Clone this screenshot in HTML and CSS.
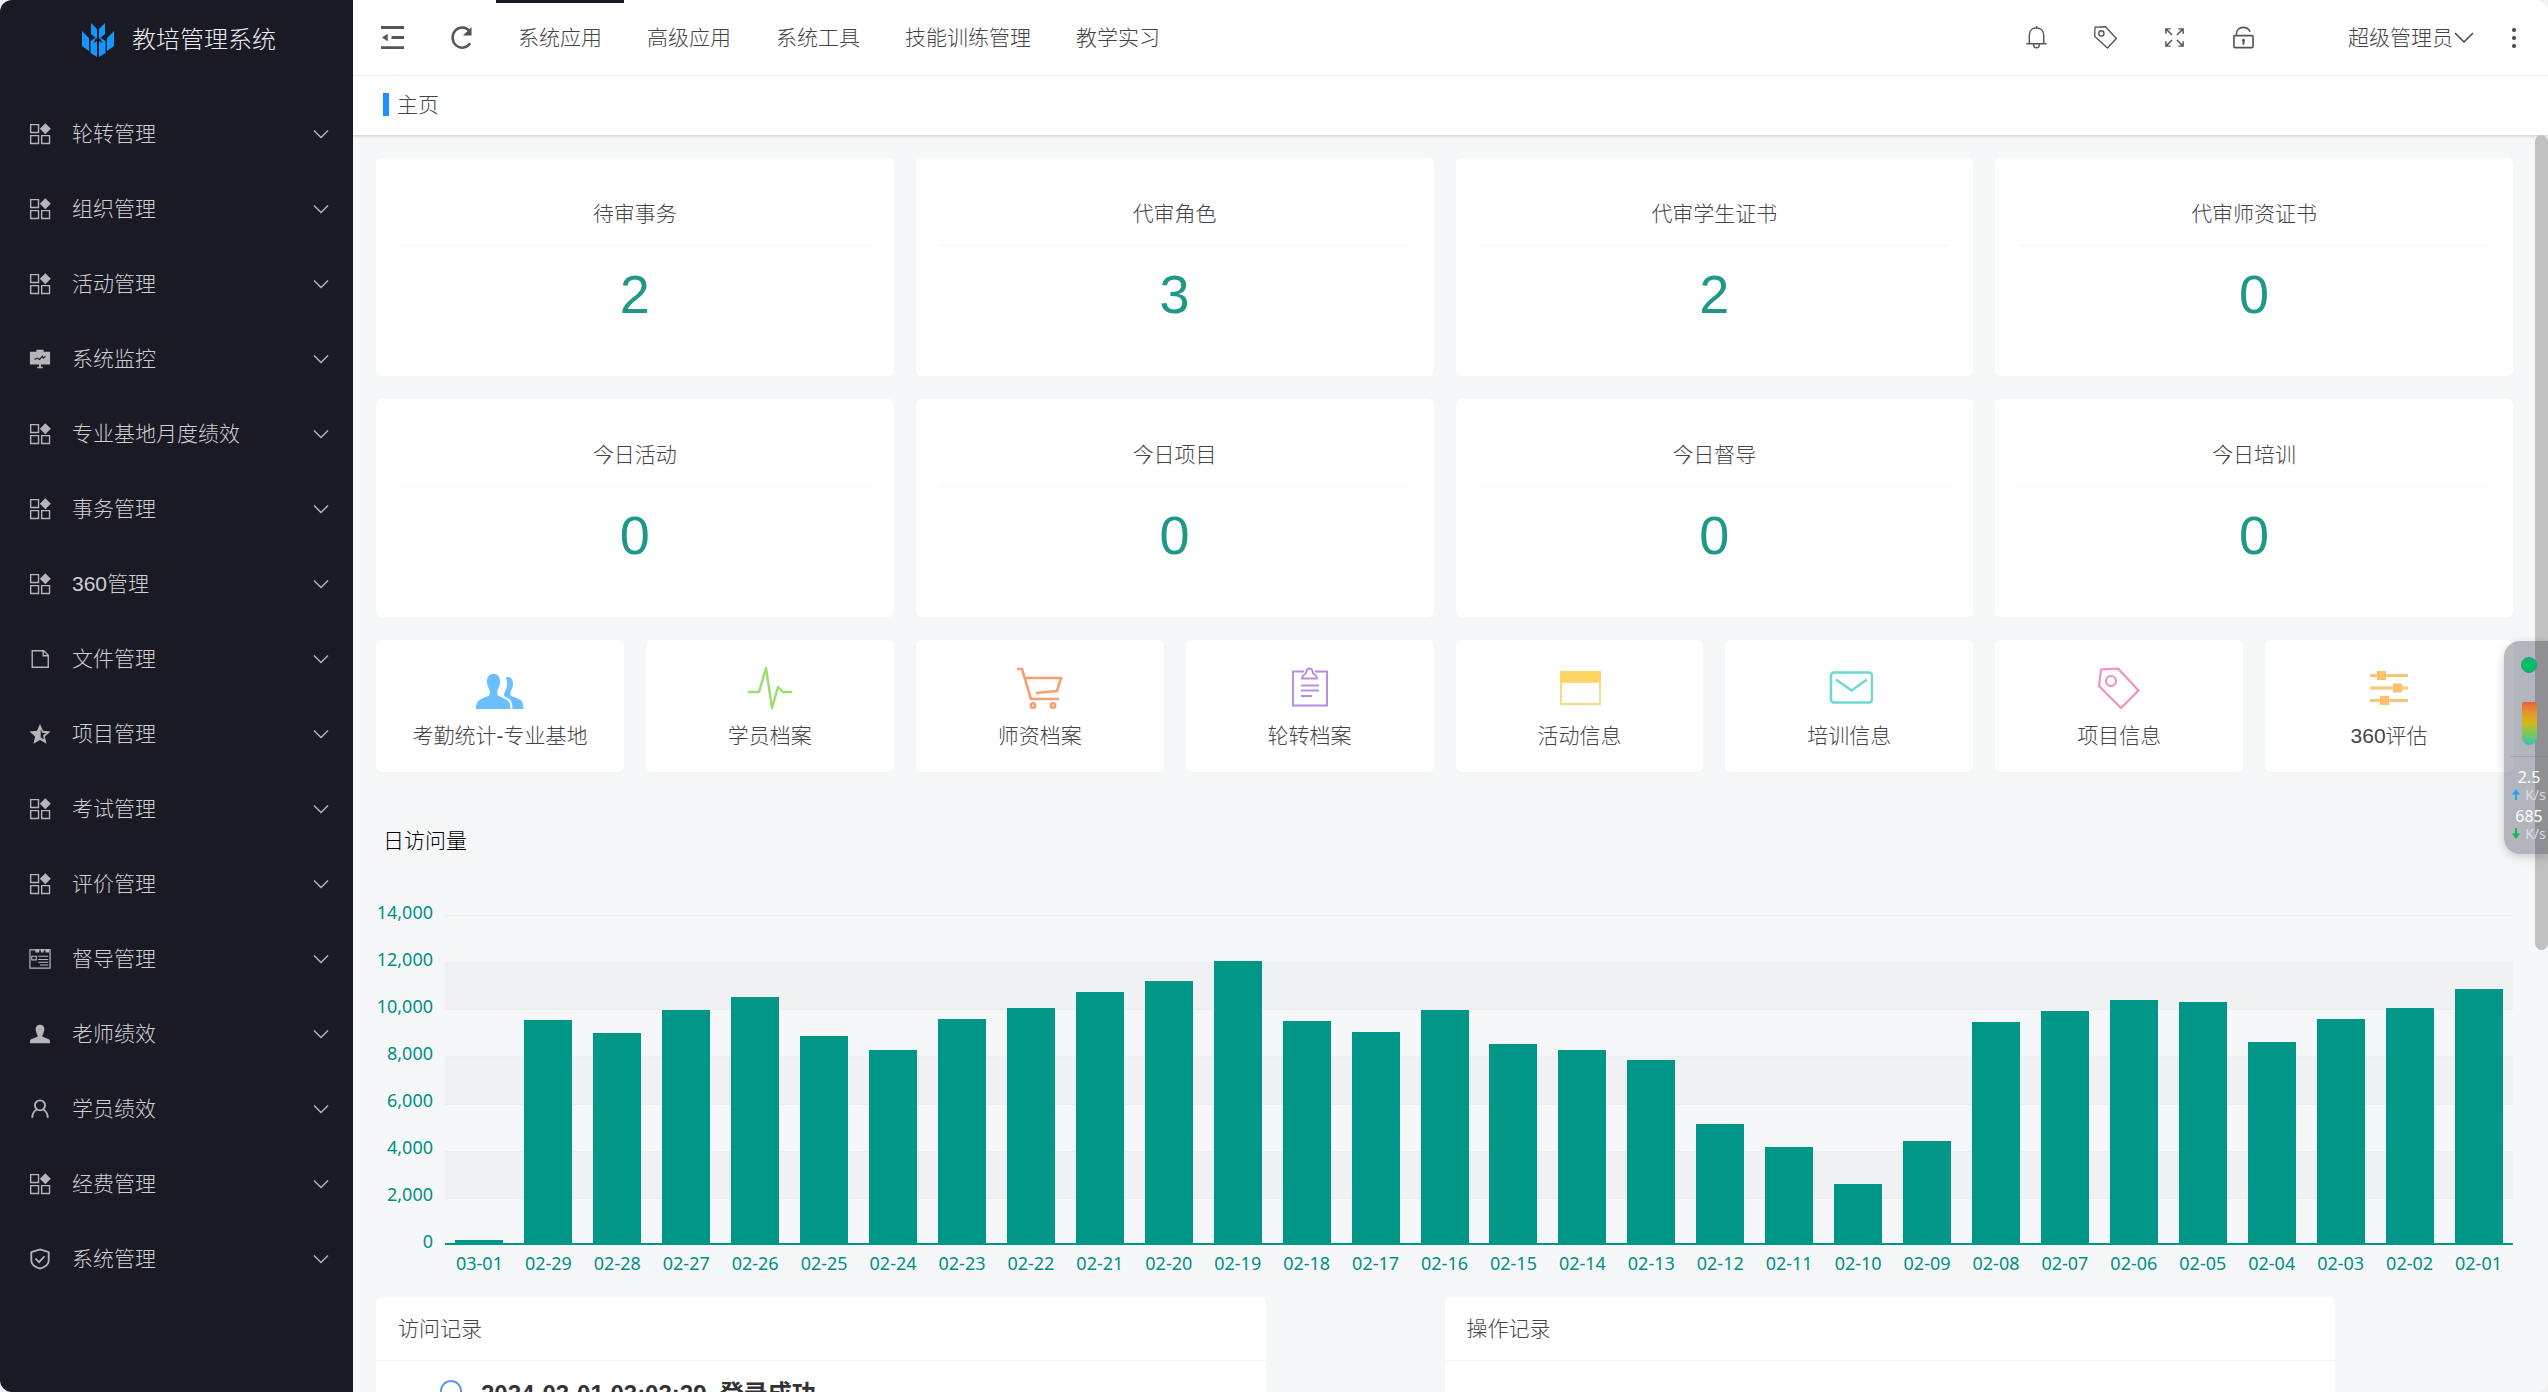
FILE: index.html
```html
<!DOCTYPE html>
<html lang="zh-CN">
<head>
<meta charset="utf-8">
<title>教培管理系统</title>
<link rel="stylesheet" href="styles.css">
</head>
<body>
<svg class="sprite" aria-hidden="true">
  <symbol id="i-app" viewBox="0 0 24 24"><g fill="none" stroke="currentColor" stroke-width="1.5"><path d="M1.800 1.800h8.600v8.600H1.800zM1.800 13.800h8.600v8.600H1.800zM13.800 13.800h8.600v8.600h-8.600z"/></g><path d="M17.800.3l6 6-6 6-6-6z" fill="currentColor"/></symbol>
  <symbol id="i-down" viewBox="0 0 16 16"><path d="M1 4.500l7 7 7-7" fill="none" stroke="currentColor" stroke-width="1.500"/></symbol>
  <symbol id="i-board" viewBox="0 0 24 24"><path d="M8 2h8v2h7v14h-10v2.500h2V22H9v-1.500h2V18H1V4h7z" fill="currentColor"/><path d="M6 12.500l3-1.500 2.500 1.500 3-3.500 1 2 2.500-2" fill="none" stroke="#191a23" stroke-width="1.200"/></symbol>
  <symbol id="i-file" viewBox="0 0 24 24"><path d="M3.500 3h12.500l5 5v13h-17.500zM15.500 3v5.500h5.500" fill="none" stroke="currentColor" stroke-width="1.500"/></symbol>
  <symbol id="i-star" viewBox="0 0 24 24"><path d="M12 1l3.300 7.500 8.200.8-6.200 5.400 1.800 8L12 18.500l-7.100 4.200 1.800-8L.5 9.300l8.200-.8z" fill="currentColor"/><path d="M12.800 6.500l1.500 4 4.200.4-3.200 2.800.9 4.100-3.400-2z" fill="#191a23"/></symbol>
  <symbol id="i-form" viewBox="0 0 24 24"><path d="M1 2h22v20H1z" fill="none" stroke="currentColor" stroke-width="1.300"/><path d="M7 1h4v4H7zM13 1h3v4h-3zM18 1h4v4h-4z" fill="currentColor"/><path d="M3 9h5v4H3zM10 9h11M10 12.500h11M10 15.500h11M12 18.500h9" fill="none" stroke="currentColor" stroke-width="1.200"/></symbol>
  <symbol id="i-person" viewBox="0 0 24 24"><path d="M12 2c3.500 0 5 2.400 4.700 5.500-.2 2.500-1.500 4.500-2 5.500v2l7 2.700c1 .4 1.300 1.300 1.300 4.300H1c0-3 .3-3.900 1.300-4.300l7-2.700v-2c-.5-1-1.800-3-2-5.500C7 4.400 8.500 2 12 2z" fill="currentColor"/></symbol>
  <symbol id="i-user" viewBox="0 0 24 24"><g fill="none" stroke="currentColor" stroke-width="2"><circle cx="12" cy="8" r="5.500"/><path d="M8.500 12.500C5 14.500 3.500 17.500 3.500 21.500M15.500 12.500c3.500 2 5 5 5 9"/></g></symbol>
  <symbol id="i-shield" viewBox="0 0 24 24"><path d="M12 1.500l9.500 3v9c0 4.500-5 7.500-9.500 9-4.500-1.500-9.500-4.500-9.500-9v-9zM7 11.500l4 4 6-6.500" fill="none" stroke="currentColor" stroke-width="2"/></symbol>
</svg>
<div class="app">
  <aside class="side">
    <a class="brand" href="#">
      <svg class="brand-mark" viewBox="0 0 32 34"><path fill="#1296ff" d="M9 0l6 6v10l-6-5zM23 0l-6 6v10l6-5zM0 8l7 7v13l-7-5zM32 8l-7 7v13l7-5zM8.500 18l6-4-3 6 3.500-2v16l-6.500-4zM23.500 18l-6-4 3 6-3.500-2v16l6.500-4z"/></svg>
      <span>教培管理系统</span>
    </a>
    <nav class="menu">
      <a href="#"><svg><use href="#i-app"/></svg><span>轮转管理</span><svg class="chev"><use href="#i-down"/></svg></a>
      <a href="#"><svg><use href="#i-app"/></svg><span>组织管理</span><svg class="chev"><use href="#i-down"/></svg></a>
      <a href="#"><svg><use href="#i-app"/></svg><span>活动管理</span><svg class="chev"><use href="#i-down"/></svg></a>
      <a href="#"><svg><use href="#i-board"/></svg><span>系统监控</span><svg class="chev"><use href="#i-down"/></svg></a>
      <a href="#"><svg><use href="#i-app"/></svg><span>专业基地月度绩效</span><svg class="chev"><use href="#i-down"/></svg></a>
      <a href="#"><svg><use href="#i-app"/></svg><span>事务管理</span><svg class="chev"><use href="#i-down"/></svg></a>
      <a href="#"><svg><use href="#i-app"/></svg><span>360管理</span><svg class="chev"><use href="#i-down"/></svg></a>
      <a href="#"><svg><use href="#i-file"/></svg><span>文件管理</span><svg class="chev"><use href="#i-down"/></svg></a>
      <a href="#"><svg><use href="#i-star"/></svg><span>项目管理</span><svg class="chev"><use href="#i-down"/></svg></a>
      <a href="#"><svg><use href="#i-app"/></svg><span>考试管理</span><svg class="chev"><use href="#i-down"/></svg></a>
      <a href="#"><svg><use href="#i-app"/></svg><span>评价管理</span><svg class="chev"><use href="#i-down"/></svg></a>
      <a href="#"><svg><use href="#i-form"/></svg><span>督导管理</span><svg class="chev"><use href="#i-down"/></svg></a>
      <a href="#"><svg><use href="#i-person"/></svg><span>老师绩效</span><svg class="chev"><use href="#i-down"/></svg></a>
      <a href="#"><svg><use href="#i-user"/></svg><span>学员绩效</span><svg class="chev"><use href="#i-down"/></svg></a>
      <a href="#"><svg><use href="#i-app"/></svg><span>经费管理</span><svg class="chev"><use href="#i-down"/></svg></a>
      <a href="#"><svg><use href="#i-shield"/></svg><span>系统管理</span><svg class="chev"><use href="#i-down"/></svg></a>
    </nav>
  </aside>

  <div class="main">
    <header class="top">
      <button class="tool" type="button" aria-label="收起菜单"><svg viewBox="0 0 24 24" fill="currentColor"><path d="M0 0h24v3H0zM11 10.500h13v3H11zM0 21h24v3H0zM1 12l6-4v8z"/></svg></button>
      <button class="tool" type="button" aria-label="刷新"><svg viewBox="0 0 24 24"><path d="M20.500 5.500A10 10.500 0 1 0 21 18" fill="none" stroke="currentColor" stroke-width="2.600"/><path d="M22.500 1v9h-9z" fill="currentColor"/></svg></button>
      <nav class="tabs">
        <a class="on" href="#">系统应用</a>
        <a href="#">高级应用</a>
        <a href="#">系统工具</a>
        <a href="#">技能训练管理</a>
        <a href="#">教学实习</a>
      </nav>
      <div class="actions">
        <button class="tool" type="button" aria-label="消息"><svg viewBox="0 0 24 24" fill="none" stroke="currentColor" stroke-width="1.500"><path d="M1.500 18.500h21M4.500 18V10c0-5 3-8 7.500-8s7.500 3 7.500 8v8M9 19c0 2.500 1.300 3.700 3 3.700s3-1.200 3-3.700M12 0v2"/></svg></button>
        <button class="tool" type="button" aria-label="便签"><svg viewBox="0 0 24 24" fill="none" stroke="currentColor" stroke-width="1.400" stroke-linejoin="round"><path d="M1 1.200L12 .8 23.300 13 14 23 .8 11z"/><circle cx="7.700" cy="7.700" r="2.700"/></svg></button>
        <button class="tool" type="button" aria-label="全屏"><svg viewBox="0 0 24 24" fill="none" stroke="currentColor" stroke-width="1.500"><path d="M9.500 9.500L3 3M3 8V3h5M14.500 9.500L21 3M16 3h5v5M9.500 14.500L3 21M3 16v5h5M14.500 14.500L21 21M21 16v5h-5"/></svg></button>
        <button class="tool" type="button" aria-label="锁屏"><svg viewBox="0 0 24 24" fill="none" stroke="currentColor" stroke-width="1.700"><rect x="2" y="10" width="20" height="12.500" rx="1"/><path d="M4.500 9c0-4.500 2.800-7.500 7.200-7.500 3.800 0 6 1.700 7 4.500"/><path d="M12 15v4.500" stroke-width="2"/><circle cx="12" cy="14.800" r="1.500" fill="currentColor" stroke="none"/></svg></button>
        <button class="account" type="button">超级管理员<svg viewBox="0 0 20 16"><path d="M1 3l9 9 9-9" fill="none" stroke="currentColor" stroke-width="1.500"/></svg></button>
        <button class="more" type="button" aria-label="更多"><svg viewBox="0 0 6 22" fill="currentColor"><circle cx="3" cy="3" r="2"/><circle cx="3" cy="11" r="2"/><circle cx="3" cy="19" r="2"/></svg></button>
      </div>
    </header>
    <div class="crumb"><span>主页</span></div>

    <main class="content">
      <section class="stats">
        <article class="card stat"><h3>待审事务</h3><p>2</p></article>
        <article class="card stat"><h3>代审角色</h3><p>3</p></article>
        <article class="card stat"><h3>代审学生证书</h3><p>2</p></article>
        <article class="card stat"><h3>代审师资证书</h3><p>0</p></article>
        <article class="card stat"><h3>今日活动</h3><p>0</p></article>
        <article class="card stat"><h3>今日项目</h3><p>0</p></article>
        <article class="card stat"><h3>今日督导</h3><p>0</p></article>
        <article class="card stat"><h3>今日培训</h3><p>0</p></article>
      </section>

      <section class="links">
        <a class="card link" href="#"><svg viewBox="0 0 48 48" fill="#69bfff"><path d="M30 13.200c4.500-.8 7.300 2.200 7 7-.2 3.500-1.500 5.500-2.500 7.500v3.500c1.500 1.500 5 2 8.500 4 3.500 1.800 4.500 4.300 4.500 9.800H36.500c0-8-2-9.500-8.500-13 0-4 3-6.500 3-12 0-3-.3-5-1-6.800z"/><path d="M17.500 10c4.500 0 6.800 3 6.500 8.200-.2 4-1.700 6.200-2.700 8.300v4.200c1.500 1.800 4.500 2.300 8 4.300 4 2 5.200 4.500 5.200 10H0c0-5.500 1.200-8 5.200-10 3.500-2 7-2.500 8.500-4.300v-4.200c-1-2.100-2.500-4.300-2.700-8.300C10.700 13 13 10 17.500 10z"/></svg><span>考勤统计-专业基地</span></a>
        <a class="card link" href="#"><svg viewBox="0 0 48 48" fill="none" stroke="#98de6d" stroke-width="2.400" stroke-linejoin="round"><path d="M2 28h11l7-24 6 40 6-21 5 5h9"/></svg><span>学员档案</span></a>
        <a class="card link" href="#"><svg viewBox="0 0 48 48" fill="none" stroke="#f59f73" stroke-width="2.600"><path d="M1 5h5l9 30h28M8 14h37l-4 13-21 2"/><circle cx="17" cy="41.500" r="2.200"/><circle cx="37" cy="41.500" r="2.200"/></svg><span>师资档案</span></a>
        <a class="card link" href="#"><svg viewBox="0 0 48 48" fill="none" stroke="#b68ddd" stroke-width="1.900"><path d="M18 7.500H7v34h34v-34H29M16 14.500c0-3 2-4 4-5 .3-3.500 1.500-5 3.500-5s3.200 1.500 3.500 5c2 1 4 2 4 5zM15 21.500h18M15 26.500h18M15 32h11"/></svg><span>轮转档案</span></a>
        <a class="card link" href="#"><svg viewBox="0 0 48 48"><path d="M5 7h41v34H5z" fill="#f6dc84"/><path d="M5 7h41v11H5z" fill="#ffd666"/><path d="M7 19h37v20H7z" fill="#fff"/></svg><span>活动信息</span></a>
        <a class="card link" href="#"><svg viewBox="0 0 48 48" fill="none" stroke="#6cd9d2" stroke-width="2.500"><rect x="6" y="8.500" width="41" height="30" rx="3"/><path d="M11 15.500l15.500 11 15.500-11"/></svg><span>培训信息</span></a>
        <a class="card link" href="#"><svg viewBox="0 0 48 48" fill="none" stroke="#f18fc0" stroke-width="2.200" stroke-linejoin="round"><path d="M6 5.500l17-1 20.500 22L26 44 4 22z"/><circle cx="16" cy="17" r="5"/></svg><span>项目信息</span></a>
        <a class="card link" href="#"><svg viewBox="0 0 48 48"><path d="M5 11.500h38M5 24h38M5 36.500h38" stroke="#f8c67d" stroke-width="3"/><path d="M12 7h9v9h-9zM28 19.500h9v9h-9zM15 32h9v9h-9z" fill="#ffbf6b"/></svg><span>360评估</span></a>
      </section>

      <section class="visits">
        <h2>日访问量</h2>
        <div class="chart">
          <div class="scale"><span>14,000</span><span>12,000</span><span>10,000</span><span>8,000</span><span>6,000</span><span>4,000</span><span>2,000</span><span>0</span></div>
          <div class="plot">
            <div class="bands"><i></i><i></i><i></i><i></i><i></i><i></i><i></i></div>
            <div class="bars">
              <i style="height:1%"></i><i style="height:68%"></i><i style="height:64%"></i><i style="height:71%"></i><i style="height:75%"></i><i style="height:63%"></i>
              <i style="height:58.8%"></i><i style="height:68.2%"></i><i style="height:71.8%"></i><i style="height:76.4%"></i><i style="height:80%"></i><i style="height:86.1%"></i>
              <i style="height:67.6%"></i><i style="height:64.2%"></i><i style="height:70.9%"></i><i style="height:60.6%"></i><i style="height:58.8%"></i><i style="height:55.8%"></i>
              <i style="height:36.4%"></i><i style="height:29.4%"></i><i style="height:17.9%"></i><i style="height:31.2%"></i><i style="height:67.3%"></i><i style="height:70.6%"></i>
              <i style="height:74.2%"></i><i style="height:73.6%"></i><i style="height:61.2%"></i><i style="height:68.2%"></i><i style="height:71.5%"></i><i style="height:77.3%"></i>
            </div>
            <div class="days">
              <span>03-01</span><span>02-29</span><span>02-28</span><span>02-27</span><span>02-26</span><span>02-25</span><span>02-24</span><span>02-23</span><span>02-22</span><span>02-21</span>
              <span>02-20</span><span>02-19</span><span>02-18</span><span>02-17</span><span>02-16</span><span>02-15</span><span>02-14</span><span>02-13</span><span>02-12</span><span>02-11</span>
              <span>02-10</span><span>02-09</span><span>02-08</span><span>02-07</span><span>02-06</span><span>02-05</span><span>02-04</span><span>02-03</span><span>02-02</span><span>02-01</span>
            </div>
          </div>
        </div>
      </section>

      <section class="logs">
        <article class="card log">
          <h3>访问记录</h3>
          <ul><li><i></i><b>2024-03-01 03:03:29&nbsp; 登录成功</b></li></ul>
        </article>
        <article class="card log">
          <h3>操作记录</h3>
          <ul></ul>
        </article>
      </section>
    </main>
  </div>

  <div class="scrollbar"></div>
  <aside class="monitor">
    <i class="dot"></i>
    <i class="temp"></i>
    <div class="rates">
      <b>2.5</b>
      <span><svg viewBox="0 0 8 12"><path d="M4 0l4 5.500H5V11H3V5.500H0z" fill="#1ea5f5"/></svg>K/s</span>
      <b>685</b>
      <span><svg viewBox="0 0 8 12"><path d="M4 11L0 5.500h3V0h2v5.500h3z" fill="#15b55e"/></svg>K/s</span>
    </div>
  </aside>
</div>
</body>
</html>
```

FILE: styles.css
```css
* { box-sizing: border-box; }
body {
  margin: 0;
  background: #f0f0f0;
  color: #444;
  font: 300 21px/30px "Liberation Sans", "Noto Sans CJK SC", sans-serif;
}
h2, h3, p, ul { margin: 0; padding: 0; font-size: 21px; font-weight: 300; list-style: none; }
a { color: inherit; text-decoration: none; }
button { padding: 0; border: 0; background: none; color: inherit; font: inherit; cursor: pointer; }
svg { display: block; flex: none; }
.sprite { display: none; }

.app {
  position: relative;
  display: flex;
  height: 100vh;
  overflow: hidden;
  border-radius: 12px;
  background: #f5f7f9;
}

/* sidebar */
.side { flex: none; width: 353px; background: #191a23; color: #cfcfd2; }
.brand {
  display: flex;
  align-items: center;
  justify-content: center;
  gap: 18px;
  height: 80px;
  margin-bottom: 16px;
  padding-left: 5px;
  color: #ececee;
  font-size: 24px;
}
.brand-mark { width: 32px; height: 34px; }
.menu a {
  display: flex;
  align-items: center;
  gap: 21px;
  height: 75px;
  padding: 0 24px 0 29px;
}
.menu svg { width: 22px; height: 22px; color: #b5b5b8; }
.menu span { flex: 1; }
.menu .chev { width: 16px; height: 16px; }

/* top bar */
.main { flex: 1; min-width: 0; display: flex; flex-direction: column; }
.top {
  flex: none;
  display: flex;
  align-items: center;
  height: 76px;
  padding-left: 5px;
  border-bottom: 1px solid #f4f4f4;
  background: #fff;
}
.tool { display: flex; align-items: center; justify-content: center; width: 69px; height: 74px; }
.tool svg { width: 23px; height: 23px; color: #555; }
.tabs { display: flex; gap: 1px; align-self: stretch; }
.tabs a { padding: 20px 22px 0; border-top: 3px solid transparent; }
.tabs .on { border-color: #191a23; }
.actions { display: flex; align-items: center; margin-left: auto; }
.account { display: flex; align-items: center; gap: 1px; margin-left: 70px; }
.account svg { width: 20px; height: 16px; }
.more { display: flex; justify-content: flex-end; width: 74px; padding-right: 31px; }
.more svg { width: 6px; height: 22px; }

.crumb {
  flex: none;
  z-index: 1;
  display: flex;
  align-items: center;
  height: 59px;
  padding: 0 0 2px 30px;
  background: #fff;
  box-shadow: 0 1px 3px rgba(0, 0, 0, .18);
}
.crumb span { padding-left: 8px; border-left: 6px solid #1e90ff; line-height: 23px; }

/* content */
.content { flex: 1; min-height: 0; overflow: hidden; padding: 23px 35px 0 23px; }
.card { border-radius: 6px; background: #fff; }
.stats { display: grid; grid-template-columns: repeat(4, 1fr); gap: 23px 22px; }
.stat { height: 218px; padding: 24px 24px 0; text-align: center; }
.stat h3 { padding: 17px 0 16px; border-bottom: 1px solid #f6f6f6; }
.stat p { padding-top: 18px; color: #1e9986; font-size: 54px; line-height: 60px; }

.links { display: grid; grid-template-columns: repeat(8, 1fr); gap: 22px; margin-top: 23px; }
.link { display: flex; flex-direction: column; align-items: center; gap: 9px; height: 132px; padding-top: 24px; }
.link svg { width: 48px; height: 48px; }

/* daily visits */
.visits h2 { padding: 54px 0 0 7px; color: #000; }
.chart {
  display: flex;
  gap: 12px;
  margin-top: 33px;
  color: #009080;
  font-family: "Noto Sans", sans-serif;
  font-size: 18px;
  font-weight: 400;
}
.scale { display: flex; flex-direction: column; width: 57px; text-align: right; line-height: 47px; }
.plot { flex: 1; display: grid; grid-template-rows: 330px auto; padding-top: 26px; }
.bands, .bars { grid-area: 1 / 1; }
.bands { display: grid; grid-template-rows: repeat(7, 1fr); }
.bands i { border-top: 1px solid #eceeef; }
.bands i:nth-child(even) { background: #f0f1f3; }
.bars { display: grid; grid-template-columns: repeat(30, 1fr); align-items: end; border-bottom: 2px solid #009688; }
.bars i { width: 48px; justify-self: center; background: #009688; }
.days { display: grid; grid-template-columns: repeat(30, 1fr); padding-top: 6px; line-height: 24px; text-align: center; }

/* logs */
.logs { display: grid; grid-template-columns: 1fr 1fr; margin-top: 22px; }
.log { width: 83.333%; height: 300px; }
.log h3 { padding: 17px 22px 16px; border-bottom: 1px solid #f4f4f4; }
.log li { display: flex; gap: 19px; padding: 17px 64px; }
.log li i { width: 22px; height: 22px; margin-top: 2px; border: 2px solid #5b9bea; border-radius: 50%; }
.log b { color: #333; font-size: 24px; font-weight: 700; line-height: 32px; }

/* floating overlays */
.scrollbar { position: absolute; z-index: 2; top: 135px; right: 0; width: 13px; height: 815px; border-radius: 7px; background: #c1c1c1; }
.monitor {
  position: absolute;
  z-index: 3;
  top: 641px;
  right: 0;
  display: flex;
  flex-direction: column;
  align-items: center;
  width: 44px;
  height: 213px;
  padding-left: 6px;
  border-radius: 16px 0 0 16px;
  background: rgba(29, 35, 50, .31);
  box-shadow: 0 3px 10px rgba(0, 0, 0, .18);
  color: #fff;
  font: 400 14px/16px "Noto Sans", sans-serif;
}
.dot { width: 16px; height: 16px; margin: 16px 0 29px; border: 1px solid #2a91a8; border-radius: 50%; background: #05bf61; }
.temp { width: 15px; height: 43px; border-radius: 2px 2px 8px 8px; background: linear-gradient(#e0643a, #e8962a 25%, #d3b81d 50%, #71c95f 75%, #3fbdb8); }
.rates { display: grid; justify-items: center; width: 38px; margin-top: 11px; padding-top: 11px; border-top: 1px solid rgba(90, 100, 120, .2); }
.rates b { font-weight: 400; font-size: 16px; line-height: 19px; }
.rates span { display: flex; align-items: center; gap: 5px; margin-bottom: 4px; color: #dcdde0; }
.rates svg { width: 8px; height: 12px; }
```
